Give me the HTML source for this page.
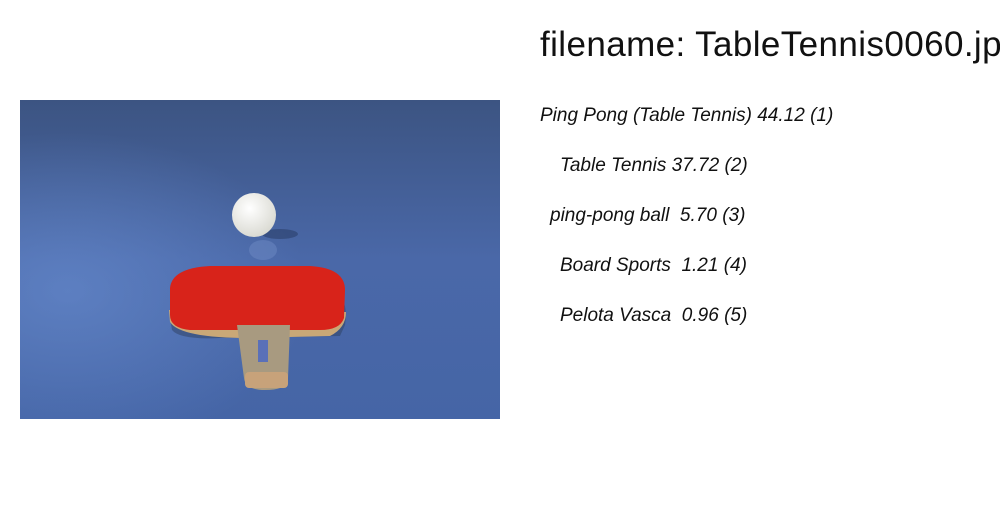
<!DOCTYPE html>
<html><head><meta charset="utf-8"><style>
body{margin:0;width:1000px;height:520px;background:#fff;overflow:hidden;position:relative;font-family:"Liberation Sans",sans-serif;color:#111}
.t{position:absolute;left:540px;top:25px;font-size:35px;letter-spacing:0.4px;white-space:nowrap}
.l{position:absolute;font-style:italic;font-size:19px;white-space:pre}
svg{position:absolute;left:20px;top:100px}
</style></head><body>
<svg width="480" height="319" viewBox="0 0 480 319">
<defs>
<linearGradient id="bg" x1="0" y1="0" x2="0" y2="1"><stop offset="0" stop-color="#3c5482"/><stop offset="0.5" stop-color="#4a68a8"/><stop offset="1" stop-color="#4565a6"/></linearGradient>
<radialGradient id="gl" cx="0.1" cy="0.6" r="0.5"><stop offset="0" stop-color="#6a8fd2" stop-opacity="0.6"/><stop offset="1" stop-color="#6a8fd2" stop-opacity="0"/></radialGradient>
<radialGradient id="ball" cx="0.4" cy="0.35" r="0.7"><stop offset="0" stop-color="#fff"/><stop offset="1" stop-color="#d8d8d0"/></radialGradient>
</defs>
<rect width="480" height="319" fill="url(#bg)"/>
<rect width="480" height="319" fill="url(#gl)"/>
<ellipse cx="243" cy="150" rx="14" ry="10" fill="#6d8ac4" opacity="0.5"/>
<ellipse cx="260" cy="134" rx="18" ry="5" fill="#2b3f6a" opacity="0.6"/>
<circle cx="234" cy="115" r="22" fill="url(#ball)"/>
<path d="M150 218 Q150 200 160 196 Q240 160 320 196 Q328 205 325 225 L320 236 L200 238 Q160 240 152 230 Z" fill="#2e3f60" opacity="0.5"/>
<path d="M149 210 L150 222 Q160 238 230 238 L310 236 Q326 228 326 212 Z" fill="#c9a877"/>
<path d="M150 188 Q152 168 190 166 L290 166 Q325 168 325 190 L324 218 Q320 230 300 230 L170 230 Q150 228 150 215 Z" fill="#d8231a"/>
<path d="M217 225 L270 225 L268 278 Q268 290 245 290 Q225 290 224 278 Z" fill="#a89a80"/>
<rect x="238" y="240" width="10" height="22" fill="#5a70b8"/>
<rect x="225" y="272" width="43" height="16" fill="#c7a27a" rx="4"/>
</svg>
<div class="t">filename: TableTennis0060.jpg</div>
<div class="l" style="left:540px;top:105px">Ping Pong (Table Tennis) 44.12 (1)</div>
<div class="l" style="left:560px;top:155px">Table Tennis 37.72 (2)</div>
<div class="l" style="left:550px;top:205px">ping-pong ball  5.70 (3)</div>
<div class="l" style="left:560px;top:255px">Board Sports  1.21 (4)</div>
<div class="l" style="left:560px;top:305px">Pelota Vasca  0.96 (5)</div>
</body></html>
